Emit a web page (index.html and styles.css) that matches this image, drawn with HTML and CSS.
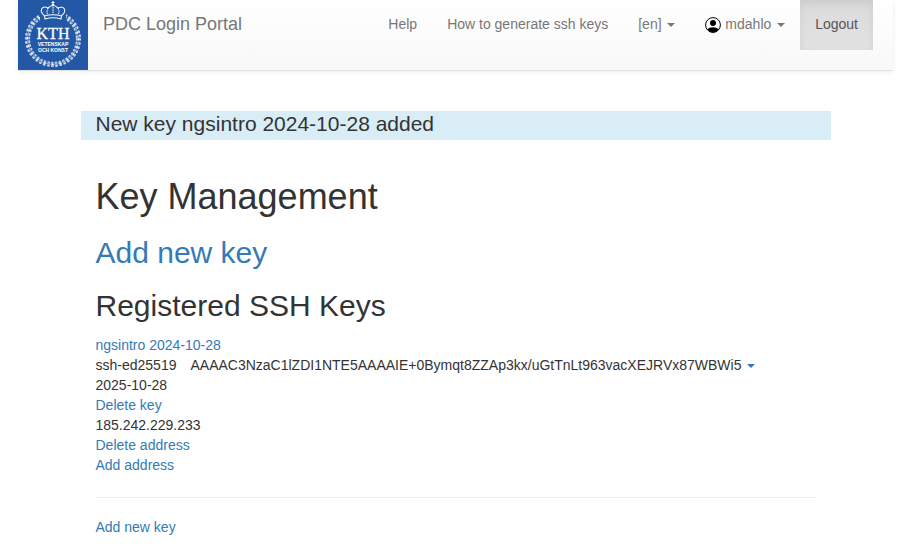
FILE: index.html
```html
<!DOCTYPE html>
<html lang="en">
<head>
<meta charset="utf-8">
<meta name="viewport" content="width=device-width, initial-scale=1">
<title>PDC Login Portal</title>
<link rel="stylesheet" href="styles.css">
</head>
<body>
<header class="navbar">
  <a class="logo" href="#" aria-label="KTH">
    <svg viewBox="0 0 70 70" width="70" height="70">
      <rect width="70" height="70" fill="#2258a5"/>
      <g fill="none" stroke="#fff" stroke-linecap="round">
        <circle cx="35" cy="39" r="25.400" stroke-width="1" opacity=".5"/>
        <circle cx="35" cy="39" r="27" stroke-width="2.200" stroke-dasharray=".8 3.440" opacity=".75"/>
        <circle cx="35" cy="39" r="23.800" stroke-width="2" stroke-dasharray=".8 2.938" opacity=".7"/>
        <circle cx="35" cy="39" r="25.400" stroke-width="1.600" stroke-dasharray=".5 7.480" opacity=".9"/>
      </g>
      <path d="M22 0h26v20H22z" fill="#2258a5"/>
      <g fill="none" stroke="#fff" stroke-width="1.100" opacity=".95">
        <path d="M27 16C20 11 24 5 30 8q5-5 10 0c6-3 10 3 3 8"/>
        <path d="M30 8q-2 4 0 7M40 8q2 4 0 7M35 7v8" stroke-dasharray="1.500 .8"/>
        <path d="M26.500 16q8.500-2.500 17 0l-.5 3q-8-2.500-16 0z"/>
        <path d="M35 1v3M33.500 2.500h3"/>
      </g>
      <circle cx="35" cy="5" r="1.300" fill="#fff"/>
      <g fill="#fff" text-anchor="middle" class="logo-text">
        <text x="35" y="39" class="logo-name">KTH</text>
        <text x="35" y="46" class="logo-motto">VETENSKAP</text>
        <text x="35" y="52" class="logo-motto">OCH KONST</text>
      </g>
    </svg>
  </a>
  <a class="brand" href="#">PDC Login Portal</a>
  <nav class="menu">
    <a href="#">Help</a>
    <a href="#">How to generate ssh keys</a>
    <button type="button">[en] <span class="caret"></span></button>
    <button type="button"><svg class="user" viewBox="0 0 16 16" width="16" height="16"><circle cx="8" cy="8" r="7.400" fill="#fff" stroke="#000" stroke-width="1"/><circle cx="8" cy="6" r="3" fill="#000"/><path d="M2.500 12.500C4 9.500 12 9.500 13.500 12.500Q11.500 15.500 8 15.500T2.500 12.500Z" fill="#000"/></svg> mdahlo <span class="caret"></span></button>
    <a class="active" href="#">Logout</a>
  </nav>
</header>
<main class="container">
  <p class="notice" role="status">New key ngsintro 2024-10-28 added</p>
  <h1>Key Management</h1>
  <h2><a href="#">Add new key</a></h2>
  <h2>Registered SSH Keys</h2>
  <ul class="keys">
    <li><a href="#">ngsintro 2024-10-28</a></li>
    <li class="key"><span>ssh-ed25519</span><span>AAAAC3NzaC1lZDI1NTE5AAAAIE+0Bymqt8ZZAp3kx/uGtTnLt963vacXEJRVx87WBWi5 <a href="#" aria-label="Show full key"><span class="caret"></span></a></span></li>
    <li>2025-10-28</li>
    <li><a href="#">Delete key</a></li>
    <li>185.242.229.233</li>
    <li><a href="#">Delete address</a></li>
    <li><a href="#">Add address</a></li>
  </ul>
  <hr>
  <a href="#">Add new key</a>
</main>
</body>
</html>
```

FILE: styles.css
```css
* {
  box-sizing: border-box;
}

body {
  margin: 0;
  padding: 0 17px 0 18px;
  background: #fff;
  color: #333;
  font: 14px/20px "Liberation Sans", Arial, sans-serif;
}

a {
  color: #337ab7;
  text-decoration: none;
}

.navbar {
  display: flex;
  align-items: flex-start;
  padding-right: 20px;
  border-bottom: 1px solid #e2e2e2;
  background: linear-gradient(#fff, #f8f8f8);
  box-shadow: 0 1px 5px rgba(0, 0, 0, 0.075);
}

.logo svg {
  display: block;
}

.logo-text {
  font-family: "Liberation Serif", serif;
}

.logo-name {
  font-size: 16px;
  stroke: #fff;
  stroke-width: 0.3px;
}

.logo-motto {
  font: bold 5px "Liberation Sans", sans-serif;
}

.brand {
  padding: 14px 15px;
  color: #777;
  font-size: 18px;
}

.menu {
  display: flex;
  margin-left: auto;
}

.menu a,
.menu button {
  padding: 14px 15px 16px;
  border: 0;
  background: none;
  color: #777;
  font: inherit;
  line-height: 20px;
  white-space: nowrap;
}

.menu .active {
  background: linear-gradient(#dbdbdb, #e2e2e2);
  box-shadow: inset 0 3px 9px rgba(0, 0, 0, 0.075);
  color: #555;
}

.caret {
  display: inline-block;
  margin-left: 2px;
  border: 4px solid transparent;
  border-top-color: currentColor;
  border-bottom: 0;
  vertical-align: middle;
}

.user {
  vertical-align: -4px;
}

.container {
  max-width: 750px;
  margin: 40px auto 0;
  padding: 0 15px;
}

.notice {
  margin: 0 -15px;
  padding: 0 15px 3px;
  background: #d9edf7;
  font-size: 21px;
  line-height: 26px;
}

h1,
h2 {
  margin: 0;
  font-weight: 400;
}

h1 {
  margin-top: 37px;
  font-size: 36px;
  line-height: 40px;
}

h2 {
  padding-bottom: 1px;
  font-size: 30px;
  line-height: 33px;
}

h1 + h2,
h2 + h2 {
  margin-top: 19px;
}

.keys {
  margin: 12px 0 0;
  padding: 0;
  list-style: none;
}

hr {
  margin: 22px 0 19px;
  border: 0;
  border-top: 1px solid #eee;
}

.key {
  display: flex;
  gap: 14px;
}
```
